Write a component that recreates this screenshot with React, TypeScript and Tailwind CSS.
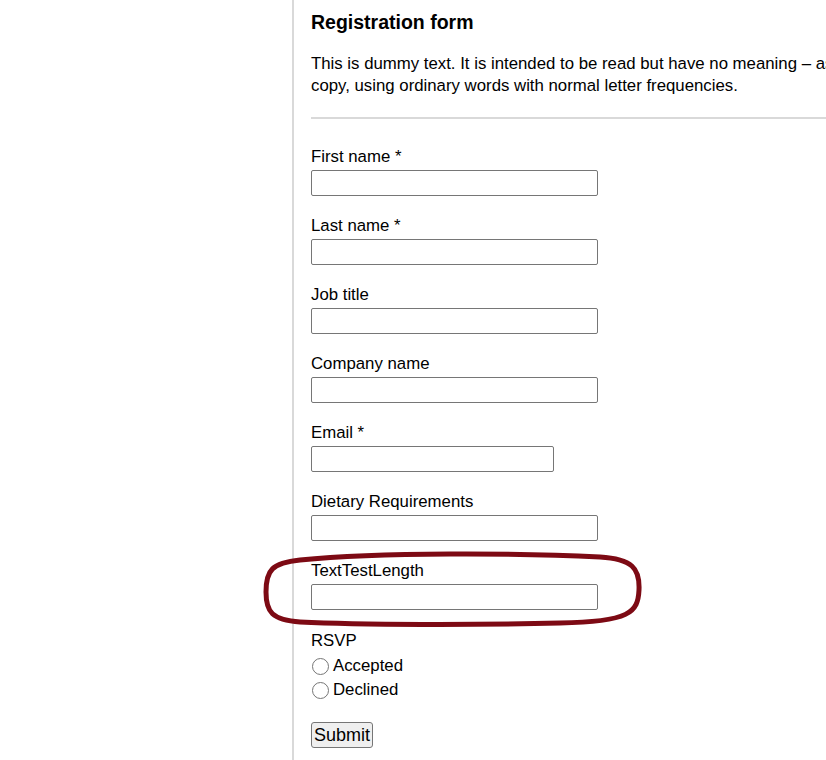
import React from "react";

const fields: { label: string; w: string }[] = [
  { label: "First name *", w: "w-[287px]" },
  { label: "Last name *", w: "w-[287px]" },
  { label: "Job title", w: "w-[287px]" },
  { label: "Company name", w: "w-[287px]" },
  { label: "Email *", w: "w-[243px]" },
  { label: "Dietary Requirements", w: "w-[287px]" },
  { label: "TextTestLength", w: "w-[287px]" },
];

export default function App() {
  return (
    <div
      className="relative w-[826px] h-[760px] overflow-hidden bg-white text-black"
      style={{ fontFamily: '"Liberation Sans", Arial, sans-serif' }}
    >
      <div className="flex h-full">
        <div className="w-[292px] shrink-0" />
        <div className="border-l-2 border-[#d9d9d9] pl-[17px] h-full w-[700px] shrink-0">
          <h1 className="text-[19.5px] leading-[24px] font-bold mt-[10px] whitespace-nowrap">
            Registration form
          </h1>
          <div className="text-[16.8px] leading-[22px] mt-[19px] whitespace-nowrap">
            <div>This is dummy text. It is intended to be read but have no meaning – as a simulation of actual</div>
            <div>copy, using ordinary words with normal letter frequencies.</div>
          </div>
          <div className="h-[2px] bg-[#d9d9d9] mt-[20px] w-[600px]" />
          <div className="mt-[28px] flex flex-col">
            {fields.map((f) => (
              <div key={f.label} className="flex flex-col mb-[20px]">
                <label className="text-[16.8px] leading-[20px] whitespace-nowrap">{f.label}</label>
                <div
                  className={`${f.w} h-[26px] mt-[3px] border border-[#767676] rounded-[2px] bg-white`}
                />
              </div>
            ))}
          </div>
          <div className="text-[16.8px] leading-[24px]">
            <div className="h-[22px] leading-[22px]">RSVP</div>
            <div className="flex items-center h-[24px] mt-[2px]">
              <span className="ml-[1px] w-[17px] h-[17px] rounded-full border border-[#767676] bg-white" />
              <span className="ml-[4px]">Accepted</span>
            </div>
            <div className="flex items-center h-[24px]">
              <span className="ml-[1px] w-[17px] h-[17px] rounded-full border border-[#767676] bg-white" />
              <span className="ml-[4px]">Declined</span>
            </div>
            <button className="mt-[20px] h-[26px] px-[2px] border border-[#767676] rounded-[3px] bg-[#efefef] text-[18px] leading-[22px] text-black">
              Submit
            </button>
          </div>
        </div>
      </div>
      <svg
        className="absolute left-0 top-0 pointer-events-none"
        width="826"
        height="760"
        viewBox="0 0 826 760"
      >
        <path
          d="M300 560 C 380 552, 520 553, 600 557 C 632 559, 640 568, 639 590 C 638 612, 630 622, 560 623 C 480 625, 360 625, 300 622 C 272 620, 266 612, 266 592 C 266 570, 272 563, 300 560 Z"
          fill="none"
          stroke="#7d0a14"
          strokeWidth="5"
        />
      </svg>
    </div>
  );
}
